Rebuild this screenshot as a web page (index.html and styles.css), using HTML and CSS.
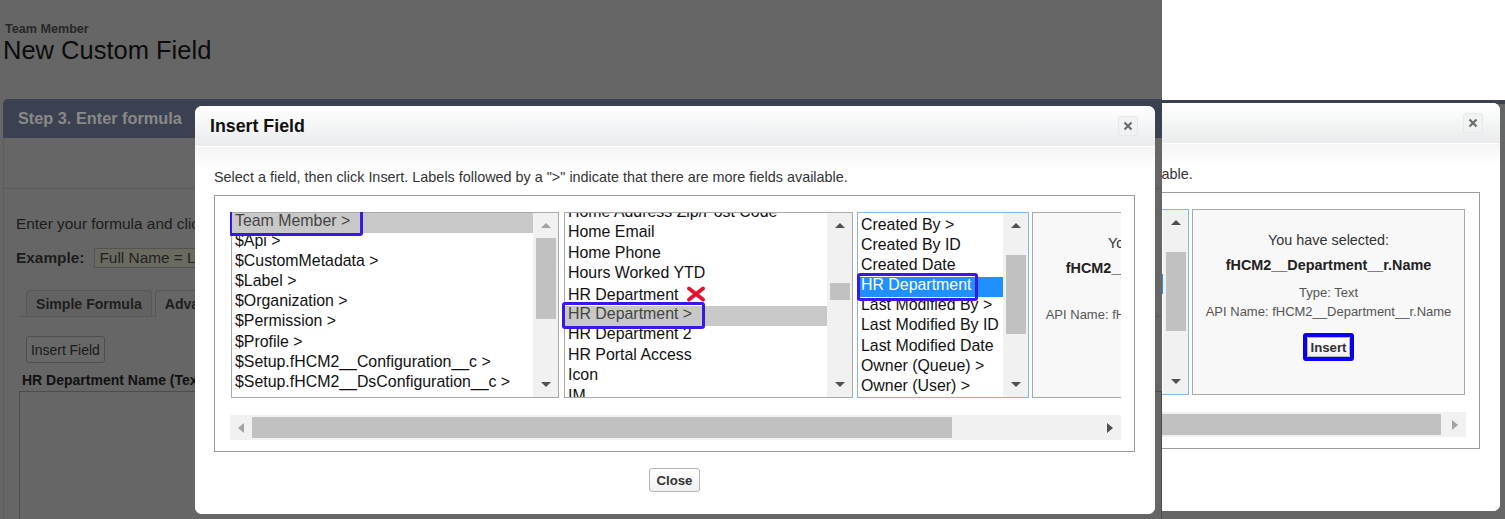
FILE: index.html
```html
<!DOCTYPE html>
<html lang="en">
<head>
  <meta charset="UTF-8">
  <title>New Custom Field - Insert Field</title>
  <link rel="stylesheet" href="styles.css">
</head>
<body>
  <!-- Main shot: setup page dimmed behind the Insert Field dialog -->
  <div class="shot shot-main">
    <div class="page">
      <div class="page-type">Team Member</div>
      <h1 class="page-title">New Custom Field</h1>

      <div class="step">
        <div class="step-head">Step 3. Enter formula</div>
        <div class="step-top"></div>
        <div class="step-body">
          <p class="step-intro">Enter your formula and click Check Syntax to check for errors. Click the Advanced Formula subtab to use additional fields, operators, and functions.</p>
          <div class="example">
            <b>Example:</b>
            <span class="example-box">Full Name = LastName &amp; ", " &amp; FirstName</span>
          </div>
          <div class="tabs">
            <span class="tab">Simple Formula</span>
            <span class="tab tab-active">Advanced Formula</span>
          </div>
          <button class="page-btn">Insert Field</button>
          <div class="formula-label">HR Department Name (Text) =</div>
          <div class="formula-box"></div>
        </div>
      </div>
    </div>

    <div class="modal">
      <div class="modal-head">
        <span class="modal-title">Insert Field</span>
        <span class="modal-close">
          <svg viewBox="0 0 10 10" width="10" height="10"><path d="M1.5 1.5L8.5 8.5M8.5 1.5L1.5 8.5" stroke="#6b6b6b" stroke-width="2.2" fill="none"/></svg>
        </span>
      </div>
      <div class="modal-body">
        <p class="modal-intro">Select a field, then click Insert. Labels followed by a "&gt;" indicate that there are more fields available.</p>
        <div class="picker">
          <div class="picker-view">
            <div class="picker-track">
              <div class="list list-1">
                <div class="list-items">
                  <div class="opt opt-sel"><span class="mark">Team Member &gt;</span></div>
                  <div class="opt">$Api &gt;</div>
                  <div class="opt">$CustomMetadata &gt;</div>
                  <div class="opt">$Label &gt;</div>
                  <div class="opt">$Organization &gt;</div>
                  <div class="opt">$Permission &gt;</div>
                  <div class="opt">$Profile &gt;</div>
                  <div class="opt">$Setup.fHCM2__Configuration__c &gt;</div>
                  <div class="opt">$Setup.fHCM2__DsConfiguration__c &gt;</div>
                </div>
                <div class="vscroll">
                  <span class="vbtn"><i class="arrow-up off"></i></span>
                  <span class="vtrack"><span class="vthumb" style="margin-top:0;height:81px"></span></span>
                  <span class="vbtn"><i class="arrow-down"></i></span>
                </div>
              </div>

              <div class="list list-2">
                <div class="list-items list-scrolled">
                  <div class="opt">Home Address Zip/Post Code</div>
                  <div class="opt">Home Email</div>
                  <div class="opt">Home Phone</div>
                  <div class="opt">Hours Worked YTD</div>
                  <div class="opt">HR Department <svg class="cross" viewBox="0 0 20 16" width="20" height="16"><path d="M3 2.5L17 13.5M17 2.5L3 13.5" stroke="#e5102b" stroke-width="3.8" stroke-linecap="round" fill="none"/></svg></div>
                  <div class="opt opt-sel"><span class="mark">HR Department &gt;</span></div>
                  <div class="opt">HR Department 2</div>
                  <div class="opt">HR Portal Access</div>
                  <div class="opt">Icon</div>
                  <div class="opt">IM</div>
                </div>
                <div class="vscroll">
                  <span class="vbtn"><i class="arrow-up"></i></span>
                  <span class="vtrack"><span class="vthumb" style="margin-top:45px;height:17px"></span></span>
                  <span class="vbtn"><i class="arrow-down"></i></span>
                </div>
              </div>

              <div class="list list-3">
                <div class="list-items">
                  <div class="opt">Created By &gt;</div>
                  <div class="opt">Created By ID</div>
                  <div class="opt">Created Date</div>
                  <div class="opt opt-focus"><span class="mark">HR Department</span></div>
                  <div class="opt">Last Modified By &gt;</div>
                  <div class="opt">Last Modified By ID</div>
                  <div class="opt">Last Modified Date</div>
                  <div class="opt">Owner (Queue) &gt;</div>
                  <div class="opt">Owner (User) &gt;</div>
                </div>
                <div class="vscroll">
                  <span class="vbtn"><i class="arrow-up"></i></span>
                  <span class="vtrack"><span class="vthumb" style="margin-top:17px;height:79px"></span></span>
                  <span class="vbtn"><i class="arrow-down"></i></span>
                </div>
              </div>

              <div class="selected">
                <div class="sel-label">You have selected:</div>
                <div class="sel-name">fHCM2__Department__r.Name</div>
                <div class="sel-type">Type: Text</div>
                <div class="sel-api">API Name: fHCM2__Department__r.Name</div>
                <div class="sel-action"><span class="mark-btn"><button class="btn-insert">Insert</button></span></div>
              </div>
            </div>
          </div>
          <div class="hscroll">
            <span class="hbtn"><i class="arrow-left off"></i></span>
            <span class="htrack"><span class="hthumb" style="margin-left:0"></span></span>
            <span class="hbtn"><i class="arrow-right"></i></span>
          </div>
        </div>
        <div class="modal-foot"><button class="btn-close">Close</button></div>
      </div>
    </div>
  </div>

  <!-- Side shot: same dialog, picker scrolled to the right end -->
  <div class="shot shot-side">
    <div class="side-top"></div>
    <div class="side-band"></div>

    <div class="modal">
      <div class="modal-head">
        <span class="modal-title">Insert Field</span>
        <span class="modal-close">
          <svg viewBox="0 0 10 10" width="10" height="10"><path d="M1.5 1.5L8.5 8.5M8.5 1.5L1.5 8.5" stroke="#6b6b6b" stroke-width="2.2" fill="none"/></svg>
        </span>
      </div>
      <div class="modal-body">
        <p class="modal-intro">Select a field, then click Insert. Labels followed by a "&gt;" indicate that there are more fields available.</p>
        <div class="picker">
          <div class="picker-view">
            <div class="picker-track" style="margin-left:-185px">
              <div class="list list-1">
                <div class="list-items">
                  <div class="opt opt-sel">Team Member &gt;</div>
                  <div class="opt">$Api &gt;</div>
                  <div class="opt">$CustomMetadata &gt;</div>
                  <div class="opt">$Label &gt;</div>
                  <div class="opt">$Organization &gt;</div>
                  <div class="opt">$Permission &gt;</div>
                  <div class="opt">$Profile &gt;</div>
                  <div class="opt">$Setup.fHCM2__Configuration__c &gt;</div>
                  <div class="opt">$Setup.fHCM2__DsConfiguration__c &gt;</div>
                </div>
                <div class="vscroll">
                  <span class="vbtn"><i class="arrow-up off"></i></span>
                  <span class="vtrack"><span class="vthumb" style="margin-top:0;height:81px"></span></span>
                  <span class="vbtn"><i class="arrow-down"></i></span>
                </div>
              </div>

              <div class="list list-2">
                <div class="list-items list-scrolled">
                  <div class="opt">Home Address Zip/Post Code</div>
                  <div class="opt">Home Email</div>
                  <div class="opt">Home Phone</div>
                  <div class="opt">Hours Worked YTD</div>
                  <div class="opt">HR Department</div>
                  <div class="opt opt-sel">HR Department &gt;</div>
                  <div class="opt">HR Department 2</div>
                  <div class="opt">HR Portal Access</div>
                  <div class="opt">Icon</div>
                  <div class="opt">IM</div>
                </div>
                <div class="vscroll">
                  <span class="vbtn"><i class="arrow-up"></i></span>
                  <span class="vtrack"><span class="vthumb" style="margin-top:45px;height:17px"></span></span>
                  <span class="vbtn"><i class="arrow-down"></i></span>
                </div>
              </div>

              <div class="list list-3">
                <div class="list-items">
                  <div class="opt">Created By &gt;</div>
                  <div class="opt">Created By ID</div>
                  <div class="opt">Created Date</div>
                  <div class="opt opt-focus">HR Department</div>
                  <div class="opt">Last Modified By &gt;</div>
                  <div class="opt">Last Modified By ID</div>
                  <div class="opt">Last Modified Date</div>
                  <div class="opt">Owner (Queue) &gt;</div>
                  <div class="opt">Owner (User) &gt;</div>
                </div>
                <div class="vscroll">
                  <span class="vbtn"><i class="arrow-up"></i></span>
                  <span class="vtrack"><span class="vthumb" style="margin-top:17px;height:79px"></span></span>
                  <span class="vbtn"><i class="arrow-down"></i></span>
                </div>
              </div>

              <div class="selected">
                <div class="sel-label">You have selected:</div>
                <div class="sel-name">fHCM2__Department__r.Name</div>
                <div class="sel-type">Type: Text</div>
                <div class="sel-api">API Name: fHCM2__Department__r.Name</div>
                <div class="sel-action"><span class="mark-btn"><button class="btn-insert">Insert</button></span></div>
              </div>
            </div>
          </div>
          <div class="hscroll">
            <span class="hbtn"><i class="arrow-left"></i></span>
            <span class="htrack"><span class="hthumb" style="margin-left:144px"></span></span>
            <span class="hbtn"><i class="arrow-right off"></i></span>
          </div>
        </div>
        <div class="modal-foot"><button class="btn-close">Close</button></div>
      </div>
    </div>
  </div>
</body>
</html>
```

FILE: styles.css
```css
/* Base */
* {
  box-sizing: border-box;
}

body {
  margin: 0;
  width: 1505px;
  height: 519px;
  overflow: hidden;
  display: flex;
  background: #666;
  font-family: "Liberation Sans", Arial, sans-serif;
}

.shot {
  position: relative;
  height: 519px;
  overflow: hidden;
  background: #666;
}

.shot-main {
  width: 1162px;
}

.shot-side {
  width: 343px;
}

/* Dimmed setup page */
.page {
  padding: 22px 0 0 3px;
  white-space: nowrap;
}

.page-type {
  padding-left: 2px;
  font-size: 12.6px;
  font-weight: bold;
  line-height: 14px;
  color: #282828;
}

.page-title {
  margin: 0;
  font-size: 25.5px;
  font-weight: normal;
  line-height: 29px;
  color: #0c0c0c;
}

.step {
  margin-top: 34px;
}

.step-head {
  height: 39px;
  padding-left: 15px;
  line-height: 39px;
  font-size: 16.3px;
  font-weight: bold;
  color: #898989;
  background: #3c4151;
  border-radius: 5px 0 0 0;
}

.step-top {
  height: 51px;
  border-left: 1px solid #5c5c5c;
  border-bottom: 1px solid #5a5a5a;
}

.step-body {
  padding: 26px 0 0 12px;
  border-left: 1px solid #5c5c5c;
}

.step-intro {
  margin: 0;
  font-size: 15.4px;
  line-height: 18px;
  color: #1c1c1c;
}

.example {
  display: flex;
  align-items: center;
  margin-top: 15px;
  font-size: 15.4px;
  color: #1c1c1c;
}

.example-box {
  height: 20px;
  margin-left: 10px;
  padding: 0 4px;
  line-height: 18px;
  border: 1px solid #535353;
  background: #6b6a60;
  color: #222;
}

.tabs {
  display: flex;
  height: 28px;
  margin: 21px 0 0 3px;
  padding: 1px 0 0 7px;
  border-bottom: 1px solid #595959;
}

.tab {
  padding: 0 9px;
  line-height: 26px;
  font-size: 14.1px;
  font-weight: bold;
  color: #1e1e1e;
  background: #626262;
  border: 1px solid #575757;
  border-bottom: none;
  border-radius: 4px 4px 0 0;
}

.tab-active {
  margin: 0 0 -1px 3px;
  background: #666;
}

.page-btn {
  display: block;
  height: 27px;
  margin: 19px 0 0 10px;
  padding: 0 4px;
  font-family: inherit;
  font-size: 13.9px;
  color: #1a1a1a;
  background: #686868;
  border: 1px solid #4e4e4e;
  border-radius: 3px;
}

.formula-label {
  margin: 9px 0 0 6px;
  font-size: 14px;
  font-weight: bold;
  line-height: 16px;
  color: #111;
}

.formula-box {
  height: 200px;
  margin: 3px 0 0 3px;
  border: 1px solid #4c4c4c;
}

/* Right shot */
.side-top {
  height: 100px;
  background: #fff;
}

.side-band {
  height: 4px;
  background: #3c4151;
}

/* Insert Field dialog */
.modal {
  position: absolute;
  width: 960px;
  height: 408px;
  display: flex;
  flex-direction: column;
  background: #fff;
  border-radius: 7px;
  overflow: hidden;
}

.shot-main .modal {
  left: 195px;
  top: 106px;
}

.shot-side .modal {
  left: -622px;
  top: 103px;
}

.modal-head {
  flex: none;
  height: 41px;
  display: flex;
  align-items: center;
  justify-content: space-between;
  padding: 0 17px 0 15px;
  background: linear-gradient(#fff, #e9ebec);
  border-bottom: 1px solid #fff;
}

.modal-title {
  font-size: 17.8px;
  font-weight: bold;
  color: #111;
}

.modal-close {
  width: 20px;
  height: 20px;
  display: flex;
  align-items: center;
  justify-content: center;
  background: #f1f2f3;
  border: 1px solid #e6e8ea;
  border-radius: 3px;
}

.modal-body {
  flex: 1;
  padding: 22px 20px 0 19px;
  background: linear-gradient(#f4f4f4, #fff 22px);
}

.modal-intro {
  margin: 0;
  font-size: 14.4px;
  line-height: 17px;
  color: #333;
  white-space: nowrap;
}

.picker {
  margin-top: 9px;
  padding: 16px 13px 11px 15px;
  border: 1px solid #9b9b9b;
}

.picker-view {
  overflow: hidden;
}

.picker-track {
  display: flex;
  width: 1077px;
  padding: 0 2px 0 1px;
}

/* Listboxes */
.list {
  flex: none;
  height: 186px;
  display: flex;
  border: 1px solid #a9a9a9;
  background: #fff;
}

.list-1 {
  width: 328px;
}

.list-2 {
  width: 289px;
  margin-left: 5px;
}

.list-3 {
  width: 172px;
  margin-left: 4px;
  border-color: #85b3f6;
}

.list-items {
  flex: 1;
  min-width: 0;
  clip-path: inset(-4px 0 0 -6px);
  font-size: 15.9px;
  color: #111;
  white-space: nowrap;
}

.list-scrolled {
  margin-top: -9px;
  clip-path: inset(9px 0 0 -6px);
}

.list-2 .opt {
  height: 20.4px;
}

.list-3 .list-items {
  padding-top: 4px;
}

.opt {
  height: 20.1px;
  padding: 0 0 0 3px;
  line-height: 16.9px;
}

.opt-sel {
  background: #c8c8c8;
  color: #444;
}

.opt-focus {
  background: #1e90ff;
  color: #fff;
}

.cross {
  margin-left: 3px;
  vertical-align: -2px;
}

.mark {
  position: relative;
  display: inline-block;
}

.mark::after {
  content: "";
  position: absolute;
  inset: -4px -13px -6px -6px;
  border: 3px solid #3619e6;
  border-radius: 3px;
}

.list-3 .mark::after {
  inset: -4px -7px -7px -4px;
}

/* Fake scrollbars */
.vscroll {
  flex: none;
  width: 25px;
  display: flex;
  flex-direction: column;
  background: #f1f1f1;
}

.vbtn {
  flex: none;
  height: 25px;
  display: flex;
  align-items: center;
  justify-content: center;
}

.vtrack {
  flex: 1;
  display: flex;
  flex-direction: column;
  align-items: center;
}

.vthumb {
  width: 20px;
  background: #c1c1c1;
}

.arrow-up,
.arrow-down {
  border-left: 5.5px solid transparent;
  border-right: 5.5px solid transparent;
}

.arrow-up {
  border-bottom: 5px solid #505050;
}

.arrow-down {
  border-top: 5px solid #505050;
}

.arrow-left,
.arrow-right {
  border-top: 5.5px solid transparent;
  border-bottom: 5.5px solid transparent;
}

.arrow-left {
  border-right: 6px solid #505050;
}

.arrow-right {
  border-left: 6px solid #505050;
}

.arrow-up.off {
  border-bottom-color: #a3a3a3;
}

.arrow-left.off {
  border-right-color: #a3a3a3;
}

.arrow-right.off {
  border-left-color: #a3a3a3;
}

.hscroll {
  display: flex;
  height: 25px;
  margin-top: 17px;
  background: #f1f1f1;
}

.hbtn {
  flex: none;
  width: 22px;
  display: flex;
  align-items: center;
  justify-content: center;
}

.htrack {
  flex: 1;
  display: flex;
  align-items: center;
}

.hthumb {
  width: 700px;
  height: 21px;
  background: #c1c1c1;
}

/* Selection summary */
.selected {
  flex: none;
  width: 273px;
  height: 186px;
  margin-left: 3px;
  padding-top: 22px;
  text-align: center;
  font-size: 14.4px;
  white-space: nowrap;
  background: #f8f8f8;
  border: 1px solid #a8a8a8;
}

.sel-label {
  line-height: 17px;
  color: #333;
}

.sel-name {
  margin-top: 8px;
  line-height: 17px;
  font-weight: bold;
  color: #222;
}

.sel-type {
  margin-top: 9px;
  font-size: 13px;
  line-height: 19px;
  color: #555;
}

.sel-api {
  font-size: 13px;
  line-height: 19px;
  color: #555;
}

.sel-action {
  margin-top: 12px;
}

.mark-btn {
  display: inline-block;
  border: 4px solid #0a00ee;
  border-radius: 3px;
}

.btn-insert,
.btn-close {
  font-family: inherit;
  font-size: 13.2px;
  font-weight: bold;
  color: #333;
  background: linear-gradient(#fff, #f0f0f0);
  border: 1px solid #b5b5b5;
  border-radius: 3px;
}

.btn-insert {
  display: block;
  height: 20px;
  padding: 0 3px;
  line-height: 17px;
  border-radius: 1px;
}

.modal-foot {
  margin-top: 16px;
  text-align: center;
}

.btn-close {
  height: 24px;
  padding: 0 7px;
}
```
